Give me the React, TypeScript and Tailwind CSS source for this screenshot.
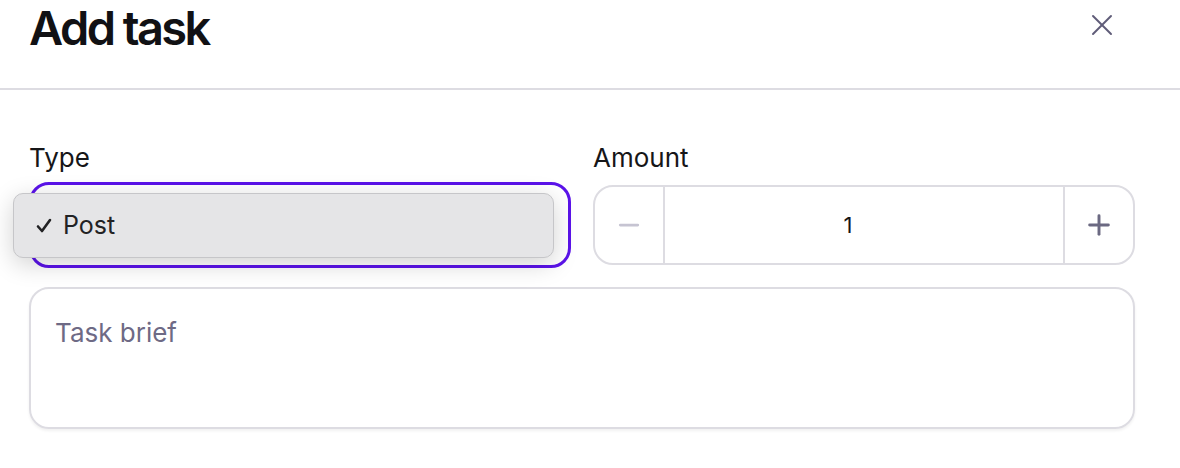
import { X, Minus, Plus } from 'lucide-react';

const font = { fontFamily: 'Inter, "Noto Sans", sans-serif' };

const Header = () => (
  <div className="flex h-[90px] items-start justify-between border-b-2 border-[#dddce2] pl-[29px] pr-[60px]">
    <h1 className="mt-[4px] text-[47px] leading-none font-semibold tracking-[-0.055em] text-[#111114]">
      Add task
    </h1>
    <button className="mt-[7px] text-[#5f5c78]">
      <X size={36} strokeWidth={1.3} />
    </button>
  </div>
);

const TypeSelect = () => (
  <div className="flex flex-col gap-[8px]">
    <label className="text-[26px] leading-8 text-[#161618]">Type</label>
    <div className="relative h-[86px] rounded-[20px] border-[3px] border-[#5b13ea] bg-white">
      {/* native option popup */}
      <div className="absolute top-[8px] left-[-19px] flex h-[65px] w-[541px] items-center gap-[11px] rounded-[10px] border border-[#c6c6c9] bg-[#e5e5e7] pl-[22px] text-[25px] text-[#222224] shadow-[0_6px_24px_rgba(0,0,0,0.18)]">
        <svg width="16" height="15" viewBox="0 0 16 15" fill="none" stroke="currentColor" strokeWidth="2.6" strokeLinecap="round" strokeLinejoin="round">
          <path d="M2 8.5 L6 13 L14 2" />
        </svg>
        <span>Post</span>
      </div>
    </div>
  </div>
);

const AmountStepper = () => (
  <div className="flex flex-col gap-[8px]">
    <label className="text-[26px] leading-8 text-[#161618]">Amount</label>
    <div className="mt-[3px] flex h-[80px] rounded-[20px] border-2 border-[#dddce2] bg-white">
      <button className="flex w-[70px] items-center justify-center border-r-2 border-[#dddce2] text-[#c6c4d2]">
        <Minus size={30} strokeWidth={2.2} />
      </button>
      <div className="flex flex-1 items-center justify-center pr-[32px] text-[22px] text-[#161618]">1</div>
      <button className="flex w-[70px] items-center justify-center border-l-2 border-[#dddce2] text-[#6b6982]">
        <Plus size={32} strokeWidth={2.2} />
      </button>
    </div>
  </div>
);

export default function App() {
  return (
    <div className="h-[468px] w-[1180px] overflow-hidden bg-white" style={font}>
      <Header />
      <div className="pt-[52px] pr-[45px] pl-[29px]">
        <div className="grid grid-cols-2 gap-[22px]">
          <TypeSelect />
          <AmountStepper />
        </div>
        <textarea
          className="mt-[19px] block h-[142px] w-full resize-none rounded-[20px] border-2 border-[#dddce2] px-[24px] pt-[28px] text-[26px] leading-8 shadow-[0_2px_3px_rgba(0,0,0,0.06)] outline-none placeholder:text-[#6e6a85]"
          placeholder="Task brief"
        />
      </div>
    </div>
  );
}
